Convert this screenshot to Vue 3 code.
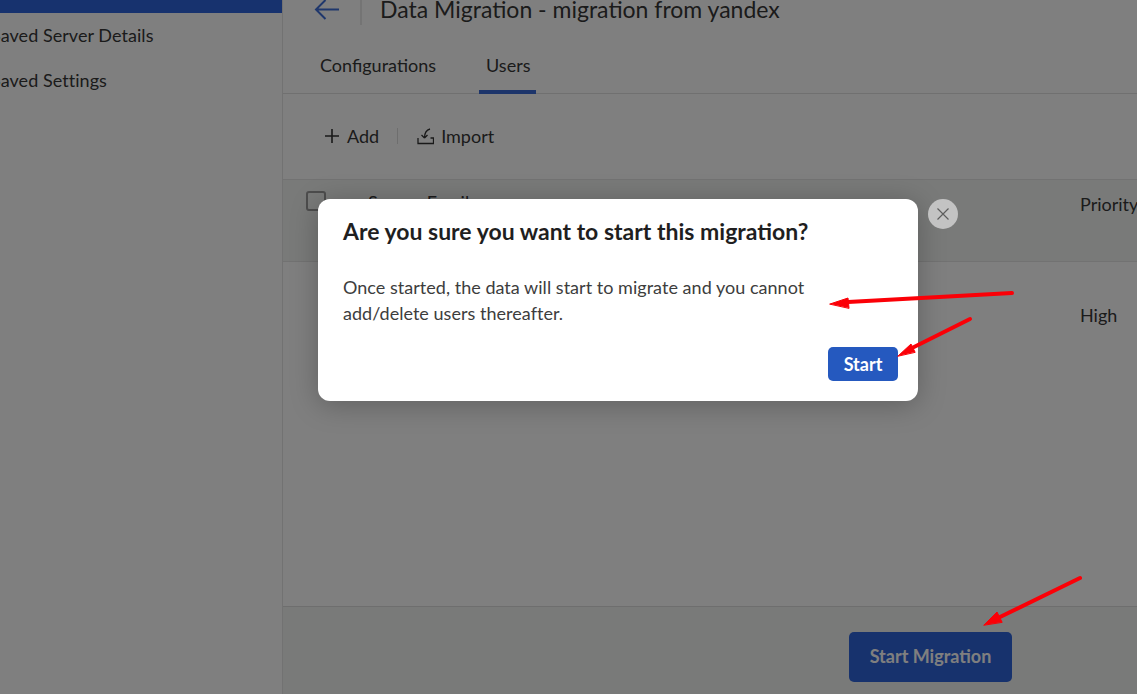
<script setup>
const sidebarItems = ['Saved Server Details', 'Saved Settings']
</script>

<template>
  <div class="page">
    <aside class="sidebar">
      <div class="active-item"></div>
      <div v-for="item in sidebarItems" :key="item" class="side-item">{{ item }}</div>
    </aside>

    <main class="main">
      <header class="title-row">
        <svg class="back" width="26" height="22" viewBox="0 0 26 22" fill="none" stroke="#3f6fd8" stroke-width="2">
          <path d="M25 10.500H2M11.500 1L2 10.500 11.500 20" />
        </svg>
        <span class="title-sep"></span>
        <h1 class="title">Data Migration - migration from yandex</h1>
      </header>

      <nav class="tabs">
        <span class="tab">Configurations</span>
        <span class="tab tab-active">Users</span>
      </nav>

      <div class="toolbar">
        <span class="tool">
          <svg width="16" height="16" viewBox="0 0 16 16" fill="none" stroke="#333" stroke-width="1.600">
            <path d="M8 1v14M1 8h14" />
          </svg>
          Add
        </span>
        <span class="tool-sep"></span>
        <span class="tool">
          <svg class="import-icon" width="17" height="18" viewBox="0 0 17 18" fill="none" stroke="#333" stroke-width="1.300">
            <path d="M1 11v5.500h15.500V11h-3M13 2C9 3 7.500 6 7.500 11M7.500 11L4.500 8M7.500 11L10.500 8" />
          </svg>
          Import
        </span>
      </div>

      <div class="table-head">
        <span class="checkbox"></span>
        <span class="col-email">Source Email</span>
        <span class="col-priority">Priority</span>
      </div>
      <div class="table-row">
        <span class="col-priority">High</span>
      </div>

      <footer class="footer">
        <button class="primary-large">Start Migration</button>
      </footer>
    </main>

    <div class="scrim"></div>

    <section class="modal">
      <h2 class="modal-title">Are you sure you want to start this migration?</h2>
      <p class="modal-text">Once started, the data will start to migrate and you cannot add/delete users thereafter.</p>
      <div class="modal-actions">
        <button class="start">Start</button>
      </div>
    </section>

    <button class="close" aria-label="Close">
      <svg width="12" height="12" viewBox="0 0 12 12" fill="none" stroke="#5d5d5d" stroke-width="1.200">
        <path d="M0.500 0.500l11 11M11.500 0.500l-11 11" />
      </svg>
    </button>

    <svg class="arrows" width="1137" height="694" viewBox="0 0 1137 694">
      <g fill="#fb0007" stroke="#fb0007" stroke-linejoin="round" stroke-linecap="round">
        <path d="M1012 293L848 302" fill="none" stroke-width="4" />
        <path d="M830 304L848 298 849 308Z" stroke-width="1" />
        <path d="M970 319L910 349" fill="none" stroke-width="4" />
        <path d="M898 356L911 344 915 352Z" stroke-width="1" />
        <path d="M1080 578L1000 617" fill="none" stroke-width="4" />
        <path d="M984 625L997 612 1002 622Z" stroke-width="1" />
      </g>
    </svg>
  </div>
</template>

<style scoped>
.page {
  position: relative;
  display: flex;
  width: 1137px;
  height: 694px;
  overflow: hidden;
  background: #fff;
  color: #373737;
  font-family: Lato, "Open Sans", sans-serif;
}
.sidebar {
  flex: 0 0 283px;
  box-sizing: border-box;
  border-right: 1px solid #e4e4e4;
}
.active-item {
  height: 13px;
  background: #2e65dc;
}
.side-item {
  margin: 0 0 0 -9px;
  height: 45px;
  line-height: 45px;
  font-size: 18px;
  letter-spacing: 0.05px;
  white-space: nowrap;
}
.main {
  flex: 1;
  display: flex;
  flex-direction: column;
  min-width: 0;
}
.title-row {
  display: flex;
  align-items: center;
  height: 26px;
  padding-left: 31px;
  margin-top: -3px;
}
.back {
  flex: none;
  margin-top: -1px;
}
.title-sep {
  width: 2px;
  height: 29px;
  margin-left: 20px;
  background: #e8e8e8;
}
.title {
  margin: -2px 0 0 18px;
  font-size: 23px;
  font-weight: 400;
  white-space: nowrap;
}
.tabs {
  display: flex;
  height: 71px;
  padding-left: 30px;
  gap: 36px;
  box-sizing: border-box;
  border-bottom: 1px solid #e0e0e0;
}
.tab {
  padding: 0 7px;
  line-height: 85px;
  font-size: 18px;
  height: 71px;
  box-sizing: border-box;
}
.tab-active {
  padding-right: 6px;
  border-bottom: 4px solid #3b6bd6;
}
.toolbar {
  display: flex;
  align-items: center;
  height: 85px;
  padding: 0 0 2px 41px;
  font-size: 18px;
  box-sizing: border-box;
}
.tool {
  display: flex;
  align-items: center;
  gap: 8px;
}
.tool:first-child {
  gap: 7px;
}
.tool-sep {
  width: 1px;
  height: 16px;
  margin: 0 18px;
  background: #dcdcdc;
}
.import-icon {
  margin: 0 -1px 0 1px;
}
.table-head,
.table-row {
  position: relative;
  box-sizing: border-box;
  font-size: 18px;
  flex: none;
}
.table-head {
  height: 83px;
  background: #f2f4f3;
  border-top: 1px solid #e4e4e4;
  border-bottom: 1px solid #e4e4e4;
  display: flex;
  padding: 11px 0 0 23px;
}
.checkbox {
  flex: none;
  width: 20px;
  height: 20px;
  box-sizing: border-box;
  border: 2px solid #9a9a9a;
  border-radius: 3px;
}
.col-email {
  margin-left: 42px;
}
.col-priority {
  margin-left: auto;
  width: 57px;
  white-space: nowrap;
}
.table-head .col-priority {
  padding-top: 2px;
}
.table-row {
  flex: 1;
  display: flex;
  padding-top: 42px;
}
.footer {
  flex: none;
  height: 88px;
  box-sizing: border-box;
  background: #f2f4f3;
  border-top: 1px solid #dcdcdc;
  padding: 25px 125px 0 0;
  display: flex;
  justify-content: flex-end;
}
.primary-large {
  width: 163px;
  height: 50px;
  border: 0;
  border-radius: 5px;
  background: #2e64da;
  color: #fff;
  font-family: inherit;
  font-size: 18px;
  font-weight: 700;
  padding: 0 0 2px;
}
.scrim {
  position: absolute;
  inset: 0;
  background: rgba(0, 0, 0, 0.5);
}
.modal {
  position: absolute;
  left: 318px;
  top: 199px;
  width: 600px;
  height: 202px;
  box-sizing: border-box;
  padding: 17px 20px 0 25px;
  background: #fff;
  border-radius: 12px;
  box-shadow: 0 4px 28px rgba(0, 0, 0, 0.25);
}
.modal-title {
  margin: 0;
  font-size: 23px;
  line-height: 30px;
  font-weight: 700;
  color: #1f1f1f;
}
.modal-text {
  margin: 28px 90px 0 0;
  font-size: 18px;
  line-height: 26px;
  letter-spacing: 0.03px;
  color: #3d3d3d;
}
.modal-actions {
  display: flex;
  justify-content: flex-end;
  margin-top: 21px;
}
.start {
  width: 70px;
  height: 34px;
  border: 0;
  border-radius: 5px;
  background: #2559bf;
  color: #fff;
  font-family: inherit;
  font-size: 18px;
  font-weight: 700;
}
.close {
  position: absolute;
  left: 928px;
  top: 199px;
  width: 30px;
  height: 30px;
  padding: 0;
  display: flex;
  align-items: center;
  justify-content: center;
  border: 0;
  border-radius: 50%;
  background: #c3c3c3;
}
.arrows {
  position: absolute;
  inset: 0;
  pointer-events: none;
}
</style>
